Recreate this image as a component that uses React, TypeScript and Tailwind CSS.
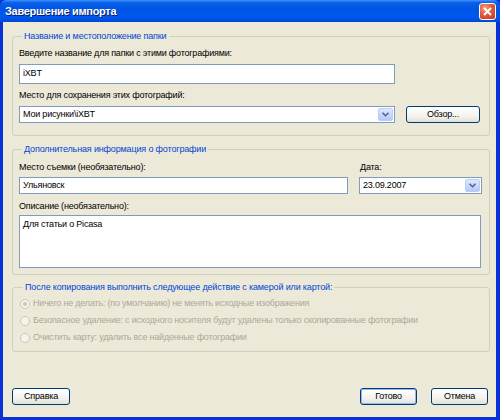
import { FC, ReactNode } from 'react';

const font = "font-['Liberation_Sans',Arial,sans-serif]";

const ArrowButton: FC = () => (
  <div className="flex h-full w-[15px] items-center justify-center rounded-[2px] border border-[#b9cdf7] bg-[linear-gradient(180deg,#dfe9fe_0%,#c3d5fd_60%,#b4c8f6_100%)]">
    <svg width="7" height="5" viewBox="0 0 7 5">
      <path d="M0.5 0.8 L3.5 3.8 L6.5 0.8" fill="none" stroke="#4d6185" strokeWidth="1.5" />
    </svg>
  </div>
);

const Group: FC<{ title: string; children: ReactNode; className?: string }> = ({ title, children, className }) => (
  <fieldset className={`rounded-[3px] border border-[#d0d0bf] pl-[6px] ${className ?? ''}`}>
    <legend className="ml-[3px] px-[2px] text-[9px] leading-[13px] tracking-[-0.15px] text-[#0046d5]">{title}</legend>
    {children}
  </fieldset>
);

const XpButton: FC<{ label: string; isDefault?: boolean; className?: string }> = ({ label, isDefault, className }) => (
  <div
    className={`flex h-[17px] items-center justify-center rounded-[3px] border border-[#003c74] bg-[linear-gradient(180deg,#ffffff_0%,#f4f3ee_60%,#e3e1d6_100%)] text-[9px] text-black ${
      isDefault ? 'shadow-[inset_0_0_0_1px_#98b8ea]' : ''
    } ${className ?? ''}`}
  >
    {label}
  </div>
);

const Radio: FC<{ label: string; checked?: boolean }> = ({ label, checked }) => (
  <div className="flex h-[17px] items-center">
    <div className="flex h-[10px] w-[10px] items-center justify-center rounded-full border border-[#cac8bb] bg-[#f5f4ea]">
      {checked && <div className="h-[4px] w-[4px] rounded-full bg-[#cac8bb]" />}
    </div>
    <span className="ml-[3px] text-[#aca899]">{label}</span>
  </div>
);

const App: FC = () => {
  return (
    <div className={`flex h-[420px] w-[500px] flex-col bg-[#0831d9] ${font}`}>
      <div className="flex h-[22px] shrink-0 items-center justify-between rounded-t-[6px] bg-[linear-gradient(180deg,#3d95ff_0%,#0a5fe8_12%,#0055e5_40%,#0058ee_75%,#0047d6_100%)] pl-[5px] pr-[4px]">
        <span className="text-[11px] font-bold tracking-[-0.3px] text-white [text-shadow:1px_1px_0_#0a1e6a]">Завершение импорта</span>
        <div className="mt-[1px] flex h-[17px] w-[17px] items-center justify-center rounded-[3px] border border-white bg-[radial-gradient(circle_at_35%_30%,#f1a58c_0%,#e25b3a_45%,#c2361c_100%)]">
          <svg width="9" height="9" viewBox="0 0 9 9">
            <path d="M1 1 L8 8 M8 1 L1 8" stroke="white" strokeWidth="1.8" />
          </svg>
        </div>
      </div>

      <div className="mx-[3px] mr-[4px] mb-[3px] flex flex-1 flex-col bg-[#ece9d8] pl-[9px] pr-[6px] pt-[8px] text-[9px] tracking-[-0.2px] text-black">
        <Group title="Название и местоположение папки" className="pb-[12px]">
          <div className="mt-[4px] h-[13px] leading-[13px]">Введите название для папки с этими фотографиями:</div>
          <div className="mt-[4px] flex h-[20px] w-[376px] items-center border border-[#7f9db9] bg-white px-[3px]">iXBT</div>
          <div className="mt-[5px] h-[13px] leading-[13px]">Место для сохранения этих фотографий:</div>
          <div className="mt-[4px] flex h-[17px] items-center gap-[11px]">
            <div className="flex h-full w-[376px] items-center border border-[#7f9db9] bg-white p-[1px] pl-[3px]">
              <span className="flex-1">Мои рисунки\iXBT</span>
              <ArrowButton />
            </div>
            <XpButton label="Обзор..." className="w-[74px]" />
          </div>
        </Group>

        <Group title="Дополнительная информация о фотографии" className="mt-[7px] pb-[6px]">
          <div className="mt-[5px] flex gap-[11px]">
            <div className="flex flex-col">
              <div className="h-[13px] leading-[13px]">Место съемки (необязательно):</div>
              <div className="mt-[3px] flex h-[17px] w-[329px] items-center border border-[#7f9db9] bg-white px-[3px]">Ульяновск</div>
            </div>
            <div className="flex flex-col">
              <div className="h-[13px] pl-[1px] leading-[13px]">Дата:</div>
              <div className="mt-[3px] flex h-[17px] w-[123px] items-center border border-[#7f9db9] bg-white p-[1px] pl-[3px]">
                <span className="flex-1">23.09.2007</span>
                <ArrowButton />
              </div>
            </div>
          </div>
          <div className="mt-[6px] h-[13px] leading-[13px]">Описание (необязательно):</div>
          <div className="mt-[2px] h-[53px] w-[462px] border border-[#7f9db9] bg-white px-[3px] pt-[2px]">Для статьи о Picasa</div>
        </Group>

        <Group title="После копирования выполнить следующее действие с камерой или картой:" className="mt-[6px] pb-[5px] pl-[7px]">
          <div className="mt-[1px] flex flex-col">
            <Radio checked label="Ничего не делать: (по умолчанию) не менять исходные изображения" />
            <Radio label="Безопасное удаление: с исходного носителя будут удалены только скопированные фотографии" />
            <Radio label="Очистить карту: удалить все найденные фотографии" />
          </div>
        </Group>

        <div className="flex-1" />
        <div className="mb-[12px] flex items-center pr-[2px]">
          <XpButton label="Справка" className="w-[58px]" />
          <div className="flex-1" />
          <XpButton label="Готово" isDefault className="w-[57px]" />
          <XpButton label="Отмена" className="ml-[14px] w-[57px]" />
        </div>
      </div>
    </div>
  );
};

export default App;
